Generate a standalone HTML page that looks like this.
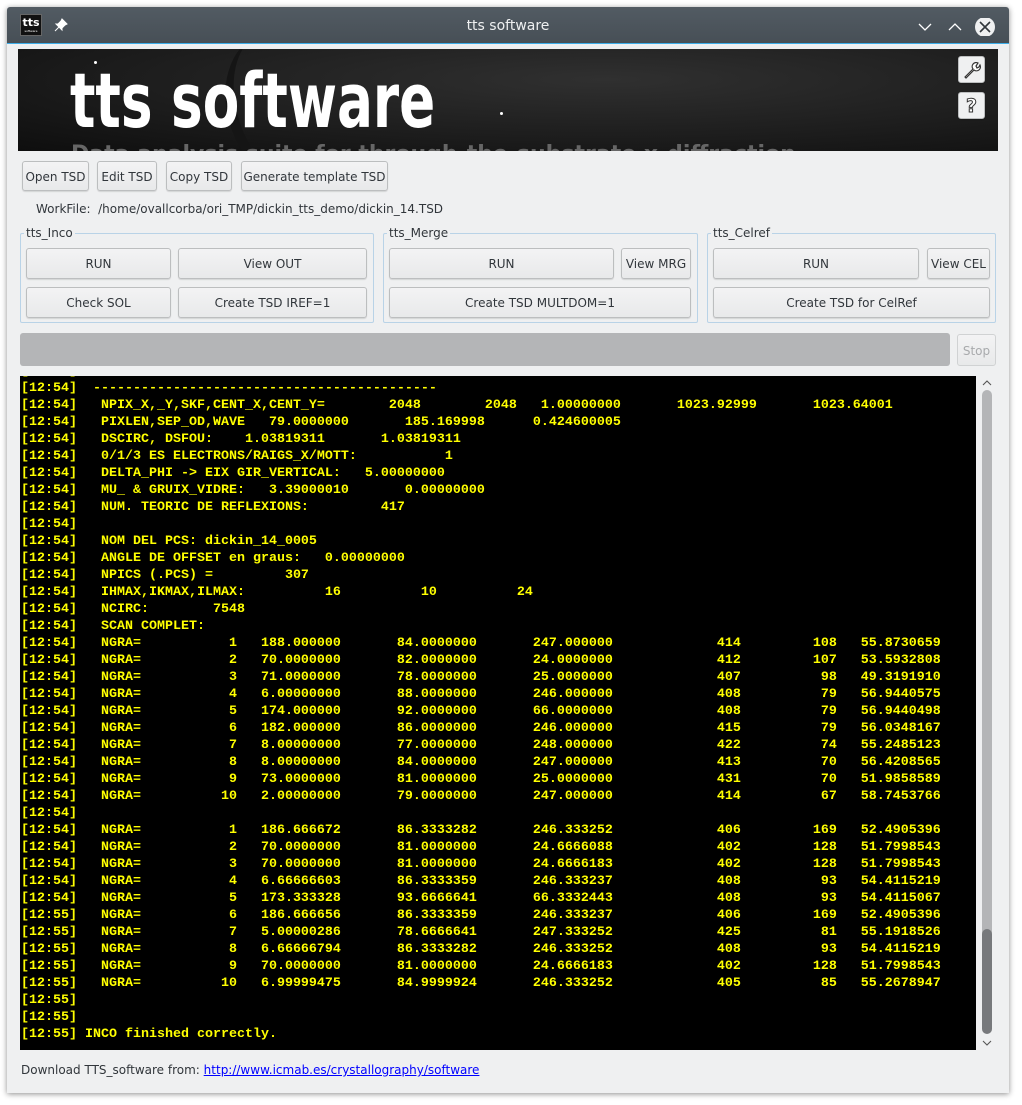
<!DOCTYPE html>
<html><head><meta charset="utf-8"><style>
*{box-sizing:border-box;margin:0;padding:0}
body{width:1022px;height:1105px;background:#fff;position:relative;overflow:hidden;font-family:"DejaVu Sans","Liberation Sans",sans-serif;font-size:12px;color:#232627}
.win{position:absolute;left:7px;top:7px;width:1002px;height:1086px;background:#eff0f1;box-shadow:0 1px 6px rgba(0,0,0,.45);border-radius:3px 3px 0 0}
.title{position:absolute;left:7px;top:7px;width:1002px;height:37px;background:linear-gradient(#525b63,#474f56);border-bottom:1px solid #3daee9;border-radius:3px 3px 0 0}
.abs{position:absolute}
.btn{position:absolute;background:linear-gradient(#f3f3f4,#e8e9ea);border:1px solid #bcbebf;border-radius:3px;text-align:center;color:#31363b;box-shadow:0 1px 1px rgba(0,0,0,.12);display:flex;align-items:center;justify-content:center;white-space:nowrap;padding-top:1px}
.grp{position:absolute;border:1px solid #b9d3e7;border-radius:2px}
.gl{position:absolute;background:#eff0f1;padding:0 2px;color:#31363b;font-size:12px}
pre{font-family:"Liberation Mono",monospace;font-size:13.33px;font-weight:bold;line-height:17px;color:#ffff00;white-space:pre}
</style></head><body>
<div class="win"></div>
<div class="title"></div>
<div class="abs" style="left:20px;top:14px;width:22px;height:22px;background:#111;border:1px solid #666;color:#fff;font:bold 11px 'DejaVu Sans',sans-serif;text-align:center;line-height:15px">tts<div style="font-size:3px;line-height:3px;font-weight:normal">software</div></div>
<svg class="abs" style="left:54px;top:18px" width="14" height="14" viewBox="0 0 14 14"><path d="M8 1 L13 6 L11 7 L8 10 L8 12 L2 6 L4 6 L7 3 Z M5 9 L1 13" fill="#fff" stroke="#fff" stroke-width="1"/></svg>
<div class="abs" style="left:0;width:1016px;top:18px;text-align:center;color:#eff0f1;font-size:14px">tts software</div>
<svg class="abs" style="left:916px;top:18px" width="80" height="18" viewBox="0 0 80 18"><path d="M3 6 L9 12 L15 6" fill="none" stroke="#fff" stroke-width="1.3"/><path d="M33 12 L39 6 L45 12" fill="none" stroke="#fff" stroke-width="1.3"/><circle cx="69" cy="9" r="10" fill="#eff0f1"/><path d="M64 4 L74 14 M74 4 L64 14" stroke="#31363b" stroke-width="1.6"/></svg>

<div class="abs" style="left:18px;top:49px;width:980px;height:102px;overflow:hidden;background:radial-gradient(ellipse at 60% 30%,#303030,#1c1c1c 60%,#0e0e0e)">
<div class="abs" style="left:210px;top:-20px;width:120px;height:160px;border-radius:50%;border-left:10px solid #151515;transform:rotate(-20deg)"></div>
<div class="abs" style="left:76px;top:12px;width:3px;height:3px;background:#fff;border-radius:2px"></div>
<div class="abs" style="left:482px;top:63px;width:3px;height:3px;background:#fff;border-radius:2px"></div>
<div class="abs" style="left:52px;top:7px;font:bold 76px 'DejaVu Sans',sans-serif;color:#fff;transform:scaleX(0.7);transform-origin:0 0;white-space:nowrap;line-height:90px">tts software</div>
<div class="abs" style="left:53px;top:93px;font:bold 22px 'DejaVu Sans',sans-serif;color:#666;white-space:nowrap">Data analysis suite for through-the-substrate x-diffraction</div>
<div class="btn" style="left:940px;top:7px;width:27px;height:27px;background:#eff0f1"><svg width="20" height="20" viewBox="0 0 20 20"><path d="M3 17 L11 9 A4 4 0 0 1 16 3 L14 6 L15 8 L17 7 L18 5 A4 4 0 0 1 12 10 L4 18 Z" fill="#fff" stroke="#333" stroke-width="1.2"/></svg></div>
<div class="btn" style="left:940px;top:43px;width:27px;height:27px;background:#eff0f1;font:bold 19px 'DejaVu Sans',sans-serif;color:#fff;-webkit-text-stroke:1px #333">?</div>
</div>

<div class="btn" style="left:22px;top:161px;width:67px;height:30px">Open TSD</div>
<div class="btn" style="left:97px;top:161px;width:60px;height:30px">Edit TSD</div>
<div class="btn" style="left:166px;top:161px;width:66px;height:30px">Copy TSD</div>
<div class="btn" style="left:241px;top:161px;width:147px;height:30px">Generate template TSD</div>
<div class="abs" style="left:36px;top:202px;color:#31363b">WorkFile:&nbsp; /home/ovallcorba/ori_TMP/dickin_tts_demo/dickin_14.TSD</div>

<div class="grp" style="left:20px;top:233px;width:354px;height:90px"></div>
<div class="gl" style="left:24px;top:226px">tts_Inco</div>
<div class="grp" style="left:383px;top:233px;width:315px;height:90px"></div>
<div class="gl" style="left:387px;top:226px">tts_Merge</div>
<div class="grp" style="left:707px;top:233px;width:289px;height:90px"></div>
<div class="gl" style="left:711px;top:226px">tts_Celref</div>

<div class="btn" style="left:26px;top:248px;width:145px;height:31px">RUN</div>
<div class="btn" style="left:178px;top:248px;width:189px;height:31px">View OUT</div>
<div class="btn" style="left:26px;top:287px;width:145px;height:31px">Check SOL</div>
<div class="btn" style="left:178px;top:287px;width:189px;height:31px">Create TSD IREF=1</div>
<div class="btn" style="left:389px;top:248px;width:225px;height:31px">RUN</div>
<div class="btn" style="left:621px;top:248px;width:70px;height:31px">View MRG</div>
<div class="btn" style="left:389px;top:287px;width:302px;height:31px">Create TSD MULTDOM=1</div>
<div class="btn" style="left:713px;top:248px;width:206px;height:31px">RUN</div>
<div class="btn" style="left:927px;top:248px;width:63px;height:31px">View CEL</div>
<div class="btn" style="left:713px;top:287px;width:277px;height:31px">Create TSD for CelRef</div>

<div class="abs" style="left:20px;top:333px;width:930px;height:33px;background:#b4b5b7;border-radius:3px"></div>
<div class="btn" style="left:957px;top:334px;width:39px;height:32px;color:#a8aaac;box-shadow:none;border-color:#d0d2d3">Stop</div>

<div class="abs" style="left:20px;top:376px;width:956px;height:674px;background:#000;overflow:hidden">
<pre style="position:absolute;left:1px;top:-13px">[12:54]  .
[12:54]  -------------------------------------------
[12:54]   NPIX_X,_Y,SKF,CENT_X,CENT_Y=        2048        2048   1.00000000       1023.92999       1023.64001
[12:54]   PIXLEN,SEP_OD,WAVE   79.0000000       185.169998      0.424600005
[12:54]   DSCIRC, DSFOU:    1.03819311       1.03819311
[12:54]   0/1/3 ES ELECTRONS/RAIGS_X/MOTT:           1
[12:54]   DELTA_PHI -&gt; EIX GIR_VERTICAL:   5.00000000
[12:54]   MU_ &amp; GRUIX_VIDRE:   3.39000010       0.00000000
[12:54]   NUM. TEORIC DE REFLEXIONS:         417
[12:54]
[12:54]   NOM DEL PCS: dickin_14_0005
[12:54]   ANGLE DE OFFSET en graus:   0.00000000
[12:54]   NPICS (.PCS) =         307
[12:54]   IHMAX,IKMAX,ILMAX:          16          10          24
[12:54]   NCIRC:        7548
[12:54]   SCAN COMPLET:
[12:54]   NGRA=           1   188.000000       84.0000000       247.000000             414         108   55.8730659
[12:54]   NGRA=           2   70.0000000       82.0000000       24.0000000             412         107   53.5932808
[12:54]   NGRA=           3   71.0000000       78.0000000       25.0000000             407          98   49.3191910
[12:54]   NGRA=           4   6.00000000       88.0000000       246.000000             408          79   56.9440575
[12:54]   NGRA=           5   174.000000       92.0000000       66.0000000             408          79   56.9440498
[12:54]   NGRA=           6   182.000000       86.0000000       246.000000             415          79   56.0348167
[12:54]   NGRA=           7   8.00000000       77.0000000       248.000000             422          74   55.2485123
[12:54]   NGRA=           8   8.00000000       84.0000000       247.000000             413          70   56.4208565
[12:54]   NGRA=           9   73.0000000       81.0000000       25.0000000             431          70   51.9858589
[12:54]   NGRA=          10   2.00000000       79.0000000       247.000000             414          67   58.7453766
[12:54]
[12:54]   NGRA=           1   186.666672       86.3333282       246.333252             406         169   52.4905396
[12:54]   NGRA=           2   70.0000000       81.0000000       24.6666088             402         128   51.7998543
[12:54]   NGRA=           3   70.0000000       81.0000000       24.6666183             402         128   51.7998543
[12:54]   NGRA=           4   6.66666603       86.3333359       246.333237             408          93   54.4115219
[12:54]   NGRA=           5   173.333328       93.6666641       66.3332443             408          93   54.4115067
[12:55]   NGRA=           6   186.666656       86.3333359       246.333237             406         169   52.4905396
[12:55]   NGRA=           7   5.00000286       78.6666641       247.333252             425          81   55.1918526
[12:55]   NGRA=           8   6.66666794       86.3333282       246.333252             408          93   54.4115219
[12:55]   NGRA=           9   70.0000000       81.0000000       24.6666183             402         128   51.7998543
[12:55]   NGRA=          10   6.99999475       84.9999924       246.333252             405          85   55.2678947
[12:55]
[12:55]
[12:55] INCO finished correctly.</pre>
</div>
<svg class="abs" style="left:980px;top:376px" width="14" height="674" viewBox="0 0 14 674"><path d="M3 9 L7 5 L11 9" fill="none" stroke="#555" stroke-width="1.1"/><rect x="2" y="14" width="10" height="560" rx="5" fill="#b4b5b7"/><rect x="2" y="553" width="10" height="105" rx="5" fill="#77797c"/><path d="M3 665 L7 669 L11 665" fill="none" stroke="#555" stroke-width="1.1"/></svg>

<div class="abs" style="left:21px;top:1063px;color:#31363b">Download TTS_software from: <span style="color:#0000ff;text-decoration:underline">http://www.icmab.es/crystallography/software</span></div>
</body></html>
